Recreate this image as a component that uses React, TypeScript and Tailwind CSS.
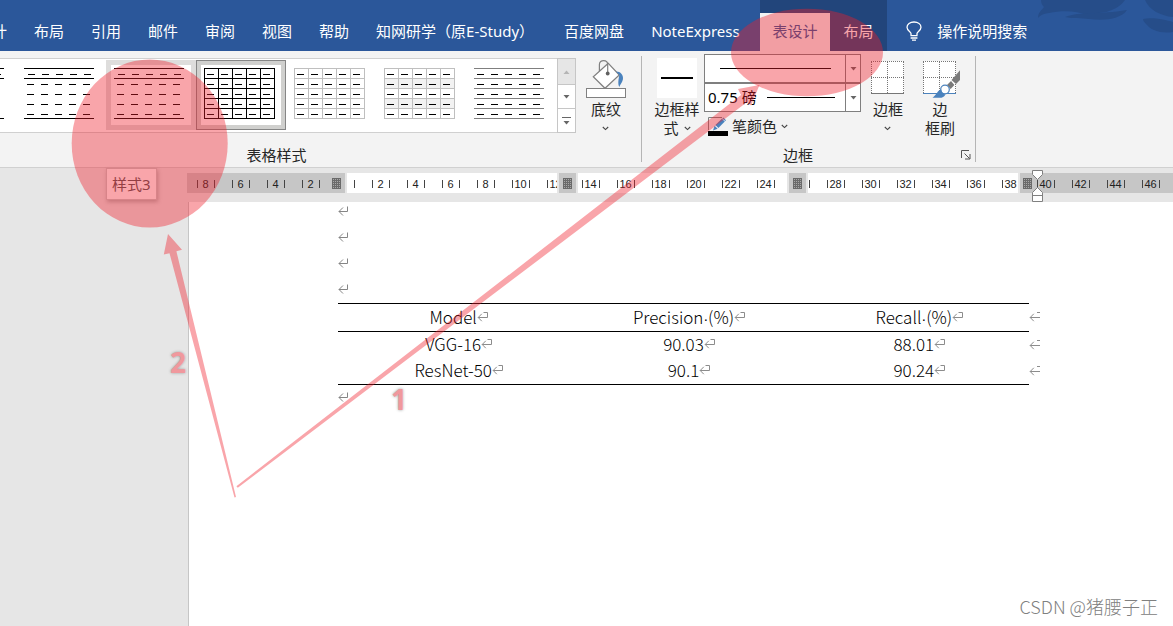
import React from 'react';

const TABS = [
  { name: '设计' },
  { name: '布局' },
  { name: '引用' },
  { name: '邮件' },
  { name: '审阅' },
  { name: '视图' },
  { name: '帮助' },
  { name: '知网研学（原E-Study）', width: 'w-[161px]' },
  { name: '百度网盘' },
  { name: 'NoteExpress', width: 'w-[92px]' },
];

const ROWS = [
  ['VGG-16', '90.03', '88.01'],
  ['ResNet-50', '90.1', '90.24'],
];

type PreviewKind = 'three-line' | 'grid-black' | 'grid-gray' | 'grid-banded' | 'lines';

const GALLERY: { name: string; kind: PreviewKind; state?: 'hover' | 'selected' }[] = [
  { name: '样式1', kind: 'three-line' },
  { name: '样式2', kind: 'three-line' },
  { name: '样式3', kind: 'three-line', state: 'hover' },
  { name: '网格型', kind: 'grid-black', state: 'selected' },
  { name: '网格型浅色', kind: 'grid-gray' },
  { name: '无格式表格1', kind: 'grid-banded' },
  { name: '无格式表格2', kind: 'lines' },
];

// Thumbnail of a table style, five rows by five columns
const TablePreview: React.FC<{ kind: PreviewKind }> = ({ kind }) => {
  const isGrid = kind.startsWith('grid');
  const color = kind === 'grid-black' || kind === 'three-line' ? '#000' : kind === 'lines' ? '#7f7f7f' : '#bfbfbf';
  const lines = kind === 'three-line' ? [0, 1, 5] : [0, 1, 2, 3, 4, 5];
  return (
    <svg width="71" height="51" viewBox="0 0 71 51" shapeRendering="crispEdges">
      {kind === 'grid-banded' && (
        <>
          <rect x="0" y="10" width="71" height="10" fill="#f2f2f2" />
          <rect x="0" y="30" width="71" height="10" fill="#f2f2f2" />
        </>
      )}
      {lines.map((n) => (
        <rect key={n} x="0" y={n * 10} width={isGrid ? 71 : 70} height="1" fill={color} />
      ))}
      {isGrid && [0, 1, 2, 3, 4, 5].map((n) => (
        <rect key={n} x={n * 14} y="0" width="1" height="51" fill={color} />
      ))}
      {[0, 1, 2, 3, 4].map((r) =>
        [0, 1, 2, 3, 4].map((c) => (
          <rect key={`${r}-${c}`} x={c * 14 + (kind === 'three-line' && r === 0 ? 4 : 3)} y={r * 10 + 6} width="7" height="1" fill="#000" />
        ))
      )}
    </svg>
  );
};

const Chevron = () => (
  <svg width="7" height="5" viewBox="0 0 7 5" fill="none">
    <path d="M0.8 1L3.5 3.6L6.2 1" stroke="#444" strokeWidth="1.1" />
  </svg>
);

const Caret: React.FC<{ className?: string }> = ({ className = 'text-[#666]' }) => (
  <svg width="7" height="4" viewBox="0 0 7 4" className={className}>
    <path d="M0.5 0H6.5L3.5 3.6Z" fill="currentColor" />
  </svg>
);

const BucketIcon = () => (
  <svg width="40" height="40" viewBox="0 0 40 40" fill="none">
    <path d="M22.3 5.3L7.3 18.7L19 30.3L33.3 17Z" fill="#fff" stroke="#808080" strokeWidth="1.2" />
    <path d="M13.4 13V6.5C13.4 1.2 21.7 1.2 21.7 6.5V15" stroke="#808080" strokeWidth="1.2" />
    <circle cx="21.7" cy="15.5" r="1.9" fill="#606060" />
    <path d="M30 13.5C35 13.5 37 17 37 20C37 24 34.5 25.5 33.4 29C31.5 26 32.6 21 33.3 17Z" fill="#4a82bd" />
    <rect x="0.5" y="30.5" width="39" height="9" fill="#fff" stroke="#808080" />
  </svg>
);

const BorderStyleIcon = () => (
  <svg width="40" height="40" viewBox="0 0 40 40" shapeRendering="crispEdges">
    <rect width="40" height="40" fill="#fff" />
    <rect x="4" y="19" width="32" height="2" fill="#000" />
  </svg>
);

const BordersIcon = () => (
  <svg width="40" height="40" viewBox="0 0 40 40" fill="none" shapeRendering="crispEdges">
    <rect x="3" y="3" width="33" height="33" fill="#fff" />
    <path d="M3.5 3.5V36M19.5 3.5V36M35.5 3.5V36M3 3.5H36M3 19.5H36" stroke="#767676" strokeDasharray="1 1" />
    <path d="M3 35.5H36" stroke="#767676" />
  </svg>
);

const BorderPainterIcon = () => (
  <svg width="40" height="40" viewBox="0 0 40 40" fill="none">
    <g shapeRendering="crispEdges">
      <rect x="3" y="3" width="33" height="33" fill="#fff" />
      <path d="M3.5 3.5V35M19.5 3.5V36M35.5 3.5V36M3 3.5H36M3 19.5H36" stroke="#767676" strokeDasharray="1 1" />
      <path d="M3 35.5H36" stroke="#4a82bd" />
    </g>
    <path d="M40 12.2V22L36 26L31.5 22Z" fill="#7a7a7a" />
    <path d="M31 23L34.4 27L30.6 31L27 27Z" fill="#7a7a7a" />
    <circle cx="25" cy="31.5" r="4.3" fill="#fff" stroke="#4a82bd" strokeWidth="1.2" />
    <path d="M12.5 39.8C17 37 17 32.5 21.2 31.6C21.4 34.6 23.6 36.2 25.4 36.4C24.4 38.8 22.4 39.8 19.5 39.8Z" fill="#4a82bd" />
  </svg>
);

const PenIcon = () => (
  <svg width="20" height="20" viewBox="0 0 20 20" fill="none">
    <path d="M14 1.5H0.5V14" stroke="#808080" />
    <path d="M5 14.5L6.6 9.8L9.6 12.8Z" fill="#4a82bd" />
    <path d="M7.4 9L15.2 1.6L18 4.2L10.4 12Z" fill="#4a82bd" />
    <path d="M14 2.4L17.3 5.6" stroke="#fff" strokeWidth="0.8" />
    <rect y="15" width="20" height="5" fill="#000" />
  </svg>
);

const BulbIcon = () => (
  <svg width="16" height="20" viewBox="0 0 16 20" fill="none" stroke="#fff" strokeWidth="1.3">
    <path d="M5 14V12.5C5 10.8 1 9.6 1 6.3C1 3.2 4 1 8 1C12 1 15 3.2 15 6.3C15 9.6 11 10.8 11 12.5V14" />
    <path d="M4.4 14.6H11.6M4.6 17H11.4M6 19.2H10" />
  </svg>
);

// Paragraph mark
const ReturnMark = () => (
  <svg width="11" height="11" viewBox="0 0 11 11" fill="none" stroke="#858585">
    <path d="M9.5 0.5V5.5H1M5 1.5L1 5.5L5 9.5" />
  </svg>
);

// End-of-cell mark
const CellMark = () => (
  <svg width="12" height="10" viewBox="0 0 12 10" fill="none" stroke="#8c8c8c" className="absolute left-full top-[7px]">
    <path d="M6.5 0.5H10.5V5.5H1.2M4.8 1.8L1.2 5.5L4.8 9.2" />
  </svg>
);

const RowMark = () => (
  <svg width="12" height="10" viewBox="0 0 12 10" fill="none" stroke="#8c8c8c" className="absolute left-full top-2">
    <path d="M8 0.5H11M11 5.5H1.2M4.8 1.8L1.2 5.5L4.8 9.2" />
  </svg>
);

const LargeButton: React.FC<{ icon: React.ReactNode; className: string; children: React.ReactNode }> = ({ icon, className, children }) => (
  <button type="button" className={`flex flex-col items-center pt-1 text-[15px] leading-[19px] ${className}`}>
    {icon}
    <span className="mt-0.5 flex flex-col items-center">{children}</span>
  </button>
);

const LineSelect: React.FC<{ label: string; value: string; lineClass: string }> = ({ label, value, lineClass }) => (
  <div className="relative h-[29px] border border-[#7f7f7f] bg-white">
    <select aria-label={label} className="h-full w-full appearance-none bg-transparent pl-[3px] text-[15px] text-black outline-none">
      <option>{value}</option>
    </select>
    <span className={`pointer-events-none absolute top-[13px] h-px bg-black ${lineClass}`} />
    <span className="pointer-events-none absolute inset-y-0 right-0 flex w-[15px] items-center justify-center border-l border-[#7f7f7f]">
      <Caret />
    </span>
  </div>
);

const Separator = () => <div className="mt-0.5 h-[106px] w-px shrink-0 bg-[#b5b5b5]" />;

const Tick = () => <span className="h-2 w-px shrink-0 bg-[#444]" />;

// One number of the ruler between its two ticks
const RulerCell: React.FC<{ value: number }> = ({ value }) => (
  <span className="flex w-[35px] shrink-0 items-center justify-center">
    <Tick />
    <span className="w-4 text-center">{value}</span>
    <Tick />
  </span>
);

const ColumnHandle = () => (
  <svg width="9" height="11" viewBox="0 0 9 11" className="shrink-0" shapeRendering="crispEdges">
    <rect width="9" height="11" fill="#a8a8a8" />
    <path d="M0.5 0V11M2.5 0V11M4.5 0V11M6.5 0V11M8.5 0V11M0 0.5H9M0 2.5H9M0 4.5H9M0 6.5H9M0 8.5H9M0 10.5H9" stroke="#6a6a6a" />
  </svg>
);

const Ruler = () => (
  <div className="flex h-[34px] gap-0.5 bg-[#e6e6e6] pb-[9px] pl-[187px] pt-[5px] font-['Liberation_Sans',sans-serif] text-[11px] leading-5 text-[#222]">
    <div className="flex w-[158px] shrink-0 items-center bg-[#c6c6c6] pl-px pt-px">
      {[8, 6, 4, 2].map((n) => <RulerCell key={n} value={n} />)}
      <span className="ml-1"><ColumnHandle /></span>
    </div>
    <div className="flex w-[210px] shrink-0 items-center overflow-hidden bg-white pl-[7px] pt-px">
      <span className="mr-2 flex"><Tick /></span>
      {[2, 4, 6, 8, 10, 12].map((n) => <RulerCell key={n} value={n} />)}
    </div>
    <div className="flex w-[17px] shrink-0 items-center justify-center bg-[#c6c6c6]"><ColumnHandle /></div>
    <div className="flex w-[209px] shrink-0 items-center overflow-hidden bg-white pt-px">
      <div className="-ml-[5px] flex">
        {[14, 16, 18, 20, 22, 24].map((n) => <RulerCell key={n} value={n} />)}
      </div>
    </div>
    <div className="flex w-[17px] shrink-0 items-center justify-center bg-[#c6c6c6]"><ColumnHandle /></div>
    <div className="flex w-[210px] shrink-0 items-center overflow-hidden bg-white pl-px pt-px">
      <span className="mr-2 flex"><Tick /></span>
      {[28, 30, 32, 34, 36, 38].map((n) => <RulerCell key={n} value={n} />)}
    </div>
    <div className="relative flex flex-1 items-center bg-[#c6c6c6] pt-px">
      <span className="absolute left-[3px] top-[5px]"><ColumnHandle /></span>
      <div className="flex w-full overflow-hidden pl-2">
        {[40, 42, 44, 46].map((n) => <RulerCell key={n} value={n} />)}
      </div>
      <svg width="12" height="33" viewBox="0 0 12 33" fill="#fff" stroke="#808080" className="absolute -top-[3px] left-3">
        <path d="M0.5 0.5H10.5V4.5L5.5 9.5L0.5 4.5Z" />
        <path d="M5.5 17.5L10.5 22.5V31.5H0.5V22.5Z" />
        <path d="M0.5 25.5H10.5" />
      </svg>
    </div>
  </div>
);

const TitleBar = () => (
  <header className="relative flex h-[51px] items-end bg-[#2b579a] text-[15px] text-white">
    <svg width="140" height="36" viewBox="0 0 140 36" className="absolute right-0 top-0" fill="#264d89">
      <path d="M8 0H92C88 6 82 9 76 11C70 14 60 12 54 15C44 11 30 10 16 13C8 14 6 17 5 18C5 12 9 10 11 7C9 5 8 3 8 0Z" />
      <path d="M32 17C48 11 66 15 94 10C88 19 72 21 56 19C48 18 40 19 32 17Z" />
      <path d="M112 0C116 10 128 16 140 17V0Z" />
      <path d="M110 19C120 17 132 20 140 22V32C128 34 118 30 114 25C112 23 110 21 110 19Z" />
    </svg>
    <nav className="-ml-[23px] flex h-[38px] shrink-0 items-center gap-[27px] pb-0.5">
      {TABS.map(({ name, width = '' }) => (
        <button key={name} type="button" className={`whitespace-nowrap text-left ${width}`}>{name}</button>
      ))}
    </nav>
    <div className="ml-[17px] flex h-full shrink-0 items-end bg-[#22457b]">
      <button type="button" className="h-[38px] w-[70px] bg-[#f3f3f3] pb-0.5 text-[#2b579a]">表设计</button>
      <button type="button" className="h-[38px] w-[57px] pb-0.5">布局</button>
    </div>
    <button type="button" className="relative ml-[19px] flex h-[38px] shrink-0 items-center gap-[15px] pb-0.5">
      <BulbIcon />
      操作说明搜索
    </button>
  </header>
);

const Gallery = () => (
  <div className="mt-1 flex h-[75px]">
    <div className="-ml-[74px] flex border-y border-[#d0d0d0] bg-white pr-px pt-px">
      {GALLERY.map(({ name, kind, state }) => (
        <div key={name} className="relative">
          <button
            type="button"
            aria-label={name}
            className={`flex h-[70px] w-[90px] items-start border p-[7px] ${
              state === 'selected'
                ? 'border-[#868686] bg-white shadow-[inset_0_0_0_4px_#d0d0ce]'
                : state === 'hover'
                  ? 'border-[#dedddc] bg-white shadow-[inset_0_0_0_4px_#dedddc]'
                  : 'border-transparent'
            }`}
          >
            <TablePreview kind={kind} />
          </button>
          {state === 'hover' && (
            <div role="tooltip" className="absolute left-0 top-[108px] z-10 whitespace-nowrap border border-[#c8c8c8] bg-white px-[5px] text-[15px] leading-[30px] text-[#555] shadow-[1px_2px_4px_rgba(0,0,0,0.25)]">
              {name}
            </div>
          )}
        </div>
      ))}
    </div>
    <div className="flex w-[19px] flex-col border border-[#c6c6c6] bg-white">
      <button type="button" aria-label="上一行" className="flex h-[26px] items-center justify-center border-b border-[#c6c6c6] bg-[#e6e6e6]">
        <Caret className="rotate-180 text-[#b5b5b5]" />
      </button>
      <button type="button" aria-label="下一行" className="flex h-6 items-center justify-center border-b border-[#c6c6c6]">
        <Caret />
      </button>
      <button type="button" aria-label="其他" className="flex flex-1 flex-col items-center justify-center gap-[3px]">
        <span className="h-px w-[9px] bg-[#666]" />
        <Caret />
      </button>
    </div>
  </div>
);

const Ribbon = () => (
  <div className="flex h-[117px] items-start border-b border-[#d0d0d0] bg-[#f3f3f3] pt-[3px] text-[#262626]">
    <section>
      <div className="flex h-[92px]">
        <Gallery />
        <LargeButton icon={<BucketIcon />} className="mr-[5px] w-[60px]">
          <span>底纹</span>
          <span className="flex h-[19px] items-center"><Chevron /></span>
        </LargeButton>
      </div>
      <h2 className="pr-[88px] text-center text-[15px] leading-[18px]">表格样式</h2>
    </section>
    <Separator />
    <section>
      <div className="flex h-[92px] px-[10px]">
        <LargeButton icon={<BorderStyleIcon />} className="mr-0.5 w-[50px]">
          <span>边框样</span>
          <span className="flex items-center gap-[5px]">式<Chevron /></span>
        </LargeButton>
        <div className="w-[157px]">
          <LineSelect label="笔样式" value="" lineClass="left-[15px] right-[29px]" />
          <LineSelect label="笔划粗细" value="0.75 磅" lineClass="left-[62px] right-[25px]" />
          <button type="button" className="ml-1 mt-1 flex h-5 items-center gap-1 text-[15px]">
            <PenIcon />
            笔颜色
            <Chevron />
          </button>
        </div>
        <LargeButton icon={<BordersIcon />} className="w-[54px]">
          <span>边框</span>
          <span className="flex h-[19px] items-center"><Chevron /></span>
        </LargeButton>
        <LargeButton icon={<BorderPainterIcon />} className="w-[50px]">
          <span>边</span>
          <span>框刷</span>
        </LargeButton>
      </div>
      <div className="flex items-center pr-1">
        <h2 className="flex-1 pr-[7px] text-center text-[15px] leading-[18px]">边框</h2>
        <button type="button" aria-label="边框和底纹">
          <svg width="10" height="10" viewBox="0 0 10 10" fill="none" stroke="#555">
            <path d="M0.5 8V0.5H8M3.5 3.5L8.5 8.5M9 4V9H4" />
          </svg>
        </button>
      </div>
    </section>
    <Separator />
  </div>
);

// The narrow middle dot stands for a space
const DataCell: React.FC<{ text: string; last: boolean }> = ({ text, last }) => (
  <>
    <span className="relative inline-block whitespace-nowrap pb-0.5 align-top leading-6">
      {text.split('·').map((part, i) => (
        <React.Fragment key={part}>
          {i > 0 && <span className="font-['Liberation_Sans',sans-serif] text-[14px] leading-none">·</span>}
          {part}
        </React.Fragment>
      ))}
      <CellMark />
    </span>
    {last && <RowMark />}
  </>
);

const Document = () => (
  <main className="ml-[188px] flex-1 border-l border-[#c6c6c6] bg-white pl-[149px] pr-36 font-['Noto_Sans_CJK_SC',sans-serif] text-[17px] font-light text-black">
    {[0, 1, 2, 3].map((n) => (
      <p key={n} className="h-[26px] pt-1"><ReturnMark /></p>
    ))}
    <table className="-mt-[3px] w-full table-fixed border-collapse border-y border-black text-center">
      <thead>
        <tr className="h-7 border-b border-black">
          {['Model', 'Precision·(%)', 'Recall·(%)'].map((text, i) => (
            <th key={text} className="relative p-0 align-middle font-light leading-[0]"><DataCell text={text} last={i === 2} /></th>
          ))}
        </tr>
      </thead>
      <tbody>
        {ROWS.map((row) => (
          <tr key={row[0]} className="h-[26px]">
            {row.map((text, i) => (
              <td key={text} className="relative p-0 align-middle leading-[0]"><DataCell text={text} last={i === 2} /></td>
            ))}
          </tr>
        ))}
      </tbody>
    </table>
    <p className="pt-[7px]"><ReturnMark /></p>
  </main>
);

// Hand-made marks on top of the window: highlighted spots, arrows and step numbers
const Annotations = () => (
  <div className="pointer-events-none absolute left-0 top-0 z-20 font-['Noto_Sans',sans-serif] text-[28px] font-bold leading-7 text-[#f0989d]">
    <svg width="1173" height="626" viewBox="0 0 1173 626" fill="#f01e2a" fillOpacity="0.4">
      <ellipse cx="149.7" cy="143.5" rx="78" ry="84" />
      <ellipse cx="807" cy="52.5" rx="76" ry="43.8" />
      <path d="M236.4 486.2L741 95L738 89L759.5 85L751 105.5L746.8 102.2L237.8 487.8Z" />
      <path d="M234.5 497.5L169.5 253.2L163.8 254.5L168 234L182 249.8L176.4 251.3L236 497Z" />
    </svg>
    <span className="absolute left-[391px] top-[385px] [text-shadow:0_0_3px_#999]">1</span>
    <span className="absolute left-[170px] top-[348px] [text-shadow:0_0_3px_#999]">2</span>
  </div>
);

export default function App() {
  return (
    <div className="relative flex min-h-screen flex-col overflow-hidden bg-[#e6e6e6] font-['Noto_Sans','Noto_Sans_CJK_SC',sans-serif]">
      <TitleBar />
      <Ribbon />
      <Ruler />
      <Document />
      <div className="absolute bottom-1.5 right-[15px] font-['Noto_Sans_CJK_SC',sans-serif] text-[18px] font-light text-[#808080]">
        CSDN @猪腰子正
      </div>
      <Annotations />
    </div>
  );
}
